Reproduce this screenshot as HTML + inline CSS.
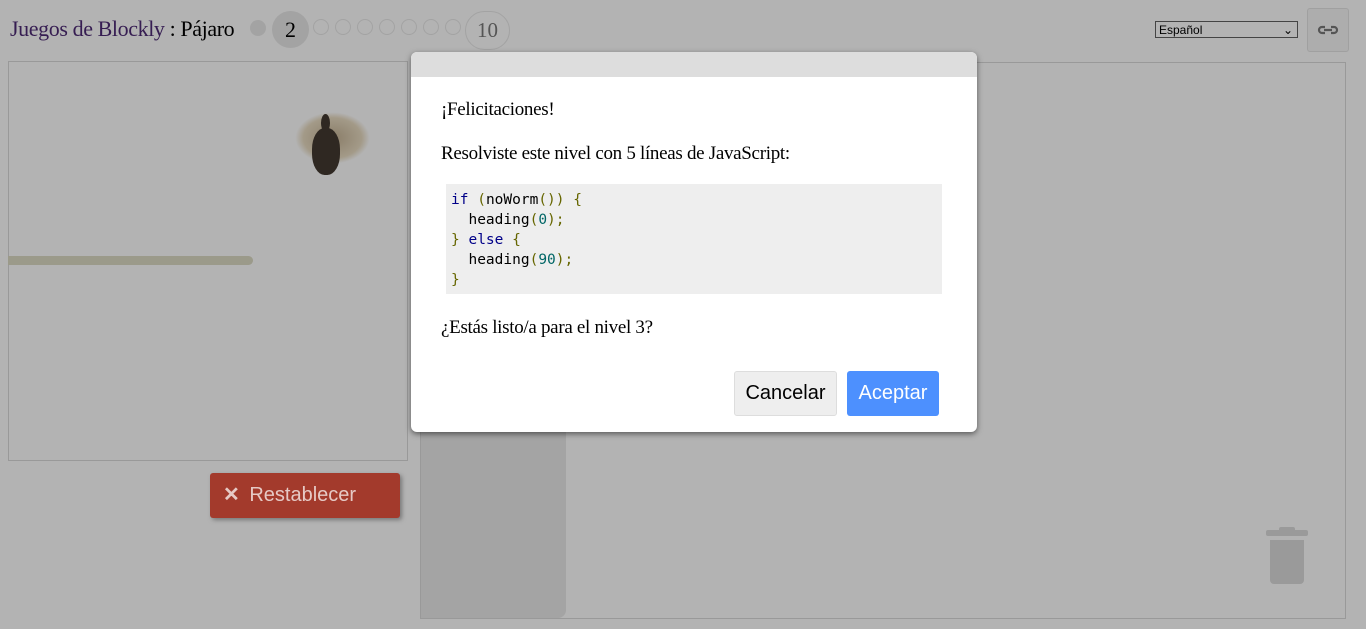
<!DOCTYPE html>
<html><head><meta charset="utf-8"><style>
body{margin:0;width:1366px;height:629px;background:#b3b3b3;position:relative;overflow:hidden;font-family:"Liberation Serif",serif;}
.a{position:absolute;}
.dot{position:absolute;top:19px;width:16px;height:16px;border:1px solid #a3a3a3;border-radius:50%;box-sizing:border-box;}
.code{font-family:"DejaVu Sans Mono","Liberation Mono",monospace;font-size:14.5px;line-height:20px;color:#000;}
</style></head><body>
<div class="a" style="left:10px;top:16px;font-size:22px;color:#361d52;letter-spacing:-0.4px">Juegos de Blockly <span style="color:#000">: Pájaro</span></div>
<div class="a" style="left:250px;top:20px;width:16px;height:16px;border-radius:50%;background:#a3a3a3"></div>
<div class="a" style="left:272px;top:11px;width:37px;height:37px;border-radius:50%;background:#a3a3a3;font-size:22px;text-align:center;line-height:37px">2</div>
<div class="dot" style="left:313px"></div><div class="dot" style="left:335px"></div><div class="dot" style="left:357px"></div><div class="dot" style="left:379px"></div><div class="dot" style="left:401px"></div><div class="dot" style="left:423px"></div><div class="dot" style="left:445px"></div>
<div class="a" style="left:465px;top:11px;width:43px;height:37px;border:1px solid #a3a3a3;border-radius:20px;font-size:21px;text-align:center;line-height:37px;color:#555">10</div>
<div class="a" style="left:1155px;top:21px;width:143px;height:17px;border:1px solid #444;background:#b3b3b3;font:12px 'Liberation Sans',sans-serif;line-height:17px;padding-left:3px;box-sizing:border-box">Español<span style="position:absolute;right:4px;top:0">⌄</span></div>
<div class="a" style="left:1307px;top:8px;width:42px;height:44px;border:1px solid #a0a0a0;border-radius:3px;background:#adadad;box-sizing:border-box"><svg width="40" height="42"><path d="M17 18h-3a3 3 0 0 0 0 6h3M23 18h3a3 3 0 0 1 0 6h-3M16 21h8" stroke="#555" stroke-width="2.2" fill="none"/></svg></div>
<div class="a" style="left:8px;top:61px;width:400px;height:400px;border:1px solid #999;box-sizing:border-box"></div>
<div class="a" style="left:8px;top:256px;width:245px;height:9px;border-radius:0 5px 5px 0;background:#9b9a8a"></div>
<div class="a" style="left:295px;top:112px;width:75px;height:52px;border-radius:50%;background:radial-gradient(#8a7d68,#a39a88 55%,transparent 70%)"></div>
<div class="a" style="left:312px;top:128px;width:28px;height:47px;border-radius:45%;background:#2f2822"></div>
<div class="a" style="left:321px;top:114px;width:9px;height:18px;border-radius:50%;background:#2f2822"></div>
<div class="a" style="left:210px;top:473px;width:190px;height:45px;background:#a33a2c;border-radius:3px;box-shadow:2px 2px 4px #777;color:#e6c9c5;font:20px 'Liberation Sans',sans-serif;line-height:45px"><span style="margin-left:13px;margin-right:4px;font-weight:bold">✕</span> Restablecer</div>
<div class="a" style="left:420px;top:62px;width:926px;height:557px;border:1px solid #999;box-sizing:border-box"></div>
<div class="a" style="left:421px;top:420px;width:145px;height:198px;background:#a4a4a4;border-radius:0 0 8px 0"></div>
<div class="a" style="left:1266px;top:530px;width:42px;height:6px;background:#9a9a9a;border-radius:2px"></div>
<div class="a" style="left:1279px;top:527px;width:16px;height:5px;background:#9a9a9a;border-radius:2px"></div>
<div class="a" style="left:1270px;top:540px;width:34px;height:44px;background:#9a9a9a;border-radius:0 0 4px 4px"></div>
<div class="a" style="left:411px;top:52px;width:566px;height:380px;background:#fff;border-radius:6px;box-shadow:0 2px 6px rgba(0,0,0,.5);overflow:hidden">
<div style="height:25px;background:#dddddd"></div>
<div class="a" style="left:30px;top:47px;font-size:19px;letter-spacing:-0.3px">¡Felicitaciones!</div>
<div class="a" style="left:30px;top:91px;font-size:19px;letter-spacing:-0.3px">Resolviste este nivel con 5 líneas de JavaScript:</div>
<div class="a code" style="left:35px;top:132px;width:496px;height:110px;background:#eeeeee;padding:6px 0 0 5px;box-sizing:border-box;white-space:pre"><span style="color:#008">if</span> <span style="color:#660">(</span>noWorm<span style="color:#660">())</span> <span style="color:#660">{</span>
  heading<span style="color:#660">(</span><span style="color:#066">0</span><span style="color:#660">);</span>
<span style="color:#660">}</span> <span style="color:#008">else</span> <span style="color:#660">{</span>
  heading<span style="color:#660">(</span><span style="color:#066">90</span><span style="color:#660">);</span>
<span style="color:#660">}</span></div>
<div class="a" style="left:30px;top:265px;font-size:19px;letter-spacing:-0.3px">¿Estás listo/a para el nivel 3?</div>
<div class="a" style="left:323px;top:319px;width:103px;height:45px;background:#eee;border:1px solid #ddd;border-radius:3px;box-sizing:border-box;font:20px 'Liberation Sans',sans-serif;line-height:43px;text-align:center">Cancelar</div>
<div class="a" style="left:436px;top:319px;width:92px;height:45px;background:#4d90fe;border-radius:3px;color:#fff;font:20px 'Liberation Sans',sans-serif;line-height:45px;text-align:center">Aceptar</div>
</div>
</body></html>
